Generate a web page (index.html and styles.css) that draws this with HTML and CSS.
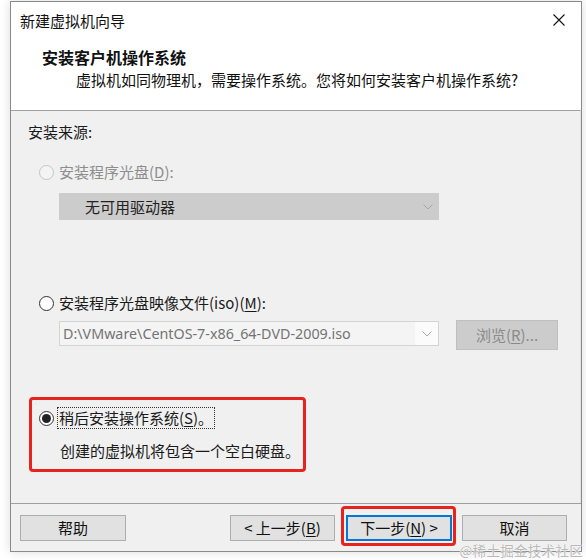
FILE: index.html
```html
<!DOCTYPE html>
<html lang="zh-CN">
<head>
<meta charset="utf-8">
<link rel="stylesheet" href="styles.css">
</head>
<body>
<div class="window">
  <div class="head">
    <div class="titlebar">
      <span class="title">新建虚拟机向导</span>
      <svg class="close" width="12" height="12" viewBox="0 0 12 12"><path d="M0.5 0.5 L11.5 11.5 M11.5 0.5 L0.5 11.5" stroke="#111" stroke-width="1.1" fill="none"/></svg>
    </div>
    <div class="heading">安装客户机操作系统</div>
    <div class="subtitle">虚拟机如同物理机，需要操作系统。您将如何安装客户机操作系统?</div>
  </div>
  <div class="body">
    <div class="source-label">安装来源:</div>
    <div class="option disabled first">
      <span class="radio"></span>
      <span class="label">安装程序光盘(<u>D</u>):</span>
    </div>
    <div class="combo combo-drive">
      <span class="combo-text">无可用驱动器</span>
      <svg class="chev" width="10" height="6" viewBox="0 0 10 6"><polyline points="0.5,0.5 5,5 9.5,0.5" fill="none" stroke="#a8a8a8" stroke-width="1"/></svg>
    </div>
    <div class="option second">
      <span class="radio"></span>
      <span class="label">安装程序光盘映像文件(iso)(<u>M</u>):</span>
    </div>
    <div class="iso-row">
      <div class="combo combo-iso">
        <span class="combo-text iso-text">D:\VMware\CentOS-7-x86_64-DVD-2009.iso</span>
        <span class="combo-btn">
          <svg class="chev" width="10" height="6" viewBox="0 0 10 6"><polyline points="0.5,0.5 5,5 9.5,0.5" fill="none" stroke="#a8a8a8" stroke-width="1"/></svg>
        </span>
      </div>
      <div class="btn btn-disabled browse">浏览(<u>R</u>)...</div>
    </div>
    <div class="highlight">
      <div class="option checked-row">
        <span class="radio checked"></span>
        <span class="label focus">稍后安装操作系统(<u>S</u>)。</span>
      </div>
      <div class="note">创建的虚拟机将包含一个空白硬盘。</div>
    </div>
  </div>
  <div class="footer">
    <div class="btn help">帮助</div>
    <div class="btn back">&lt; 上一步(<u>B</u>)</div>
    <div class="btn next">下一步(<u>N</u>) &gt;</div>
    <div class="btn cancel">取消</div>
  </div>
</div>
<div class="watermark">@稀土掘金技术社区</div>
</body>
</html>
```
FILE: styles.css
```css
html, body {
  margin: 0;
  padding: 0;
  background: #ffffff;
}
body {
  width: 586px;
  height: 560px;
  position: relative;
  overflow: hidden;
  font-family: "Noto Sans", "Noto Sans CJK SC", sans-serif;
  font-size: 15px;
  color: #1a1a1a;
}
.window {
  box-sizing: border-box;
  margin: 1px 0 0 10px;
  width: 572px;
  height: 551px;
  border: 1px solid #8a8a8a;
  background: #ffffff;
  box-shadow: 0 0 10px rgba(0, 0, 0, 0.14);
  display: flex;
  flex-direction: column;
}
u {
  text-decoration: underline;
  text-underline-offset: 2px;
  text-decoration-thickness: 1px;
}
.head {
  height: 108px;
  background: #ffffff;
}
.titlebar {
  margin-top: 9px;
  height: 20px;
  display: flex;
  align-items: center;
  justify-content: space-between;
  padding: 0 16px 0 9px;
}
.title {
  font-family: "Noto Sans CJK SC", sans-serif;
  line-height: 20px;
  color: #111;
}
.close {
  display: block;
  margin-top: -2px;
}
.heading {
  margin-top: 16px;
  padding-left: 31px;
  line-height: 20px;
  font-size: 16px;
  font-weight: bold;
  font-family: "Noto Sans CJK SC", sans-serif;
  color: #111;
}
.subtitle {
  margin-top: 3px;
  padding-left: 65px;
  line-height: 20px;
  font-family: "Noto Sans CJK SC", sans-serif;
  color: #111;
}
.body {
  flex: none;
  height: 392px;
  border-top: 1px solid #a0a0a0;
  border-right: 1px solid #e2e2e2;
  background: #f0f0f0;
  display: flex;
  flex-direction: column;
  align-items: flex-start;
  position: relative;
}
.source-label {
  margin-top: 11px;
  margin-left: 17px;
  line-height: 20px;
  font-family: "Noto Sans CJK SC", sans-serif;
}
.option {
  display: flex;
  align-items: center;
  height: 20px;
  font-family: "Noto Sans CJK SC", sans-serif;
}
.option.first {
  margin-top: 20px;
  margin-left: 28px;
}
.option.second {
  margin-top: 73px;
  margin-left: 28px;
}
.radio {
  box-sizing: border-box;
  width: 15px;
  height: 15px;
  border: 1px solid #333333;
  border-radius: 50%;
  background: #ffffff;
  margin-right: 5px;
  display: flex;
  align-items: center;
  justify-content: center;
  flex: none;
}
.disabled .radio {
  border-color: #c4c4c4;
  background: #f4f4f4;
}
.disabled .label {
  color: #8d8d8d;
}
.radio.checked::after {
  content: "";
  width: 9px;
  height: 9px;
  border-radius: 50%;
  background: #222222;
}
.label {
  line-height: 20px;
  white-space: nowrap;
}
.combo {
  box-sizing: border-box;
  display: flex;
  align-items: center;
  justify-content: space-between;
}
.combo-drive {
  margin-top: 11px;
  margin-left: 48px;
  width: 380px;
  height: 27px;
  background: #cccccc;
  padding: 0 4px 0 26px;
  font-family: "Noto Sans CJK SC", sans-serif;
  color: #222;
}
.combo-drive .chev {
  margin-right: 2px;
}
.combo-text {
  line-height: 20px;
  white-space: nowrap;
}
.iso-row {
  margin-top: 7px;
  margin-left: 48px;
  display: flex;
  align-items: flex-start;
}
.combo-iso {
  margin-top: 1px;
  width: 380px;
  height: 25px;
  background: #f4f4f4;
  border: 1px solid #d4d4d4;
  padding-left: 3px;
}
.iso-text {
  color: #737373;
  font-family: "Noto Sans", sans-serif;
  font-size: 14.3px;
}
.combo-btn {
  align-self: stretch;
  width: 23px;
  background: #fbfbfb;
  display: flex;
  align-items: center;
  justify-content: center;
}
.btn {
  box-sizing: border-box;
  height: 26px;
  border: 1px solid #adadad;
  background: #e1e1e1;
  display: flex;
  align-items: center;
  justify-content: center;
  font-family: "Noto Sans CJK SC", sans-serif;
  color: #111;
  line-height: 20px;
  white-space: nowrap;
}
.btn-disabled {
  background: #cccccc;
  border-color: #bfbfbf;
  color: #8a8a8a;
}
.browse {
  margin-left: 17px;
  width: 102px;
  height: 30px;
}
.highlight {
  box-sizing: border-box;
  margin-top: 47px;
  margin-left: 18px;
  width: 277px;
  height: 75px;
  border: 3px solid #e8231d;
  border-radius: 4px;
  padding: 8px 0 0 7px;
}
.checked-row .label.focus {
  outline: 1px dotted #333;
  outline-offset: 0px;
  padding: 0 1px;
  margin-left: -1px;
}
.note {
  margin-top: 13px;
  padding-left: 21px;
  line-height: 20px;
  font-family: "Noto Sans CJK SC", sans-serif;
}
.footer {
  flex: 1;
  border-top: 1px solid #a0a0a0;
  background: #f0f0f0;
  display: flex;
  align-items: flex-start;
  padding-top: 11px;
  padding-left: 9px;
}
.help {
  width: 106px;
}
.back {
  margin-left: 104px;
  width: 105px;
}
.next {
  margin-left: 11px;
  width: 106px;
  border: 2px solid #0078d7;
  position: relative;
}
.next::after {
  content: "";
  position: absolute;
  top: -11px;
  left: -7px;
  right: -6px;
  bottom: -7px;
  border: 3px solid #e8231d;
  border-radius: 4px;
}
.cancel {
  margin-left: 10px;
  width: 105px;
}
.watermark {
  position: absolute;
  right: 3px;
  bottom: 2px;
  font-family: "Noto Sans CJK SC", sans-serif;
  font-size: 13.5px;
  line-height: 16px;
  color: #b9b9b9;
  text-shadow: 0 0 1px #ffffff, 0 0 1px #ffffff;
  letter-spacing: 0.3px;
}
```
